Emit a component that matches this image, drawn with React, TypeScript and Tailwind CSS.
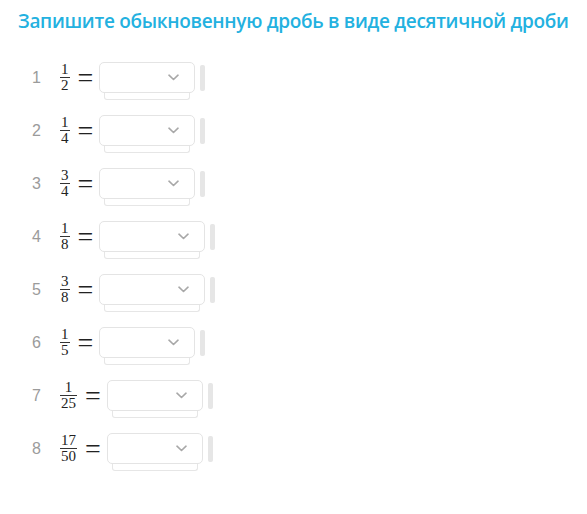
import React from "react";

type Row = { n: number; num: string; den: string; boxW: number };

const rows: Row[] = [
  { n: 1, num: "1", den: "2", boxW: 96 },
  { n: 2, num: "1", den: "4", boxW: 96 },
  { n: 3, num: "3", den: "4", boxW: 96 },
  { n: 4, num: "1", den: "8", boxW: 106 },
  { n: 5, num: "3", den: "8", boxW: 106 },
  { n: 6, num: "1", den: "5", boxW: 96 },
  { n: 7, num: "1", den: "25", boxW: 96 },
  { n: 8, num: "17", den: "50", boxW: 96 },
];

function Chevron() {
  return (
    <svg width="11" height="7" viewBox="0 0 11 7" fill="none">
      <path d="M1 1.2 L5.5 5.5 L10 1.2" stroke="#a8a8a8" strokeWidth="1.6" strokeLinecap="round" strokeLinejoin="round" />
    </svg>
  );
}

function Select({ w }: { w: number }) {
  return (
    <div className="flex items-center">
      <div className="flex flex-col pt-[7px]">
        <div
          className="h-[31px] rounded-[5px] border border-[#e4e4e4] bg-white flex items-center justify-end pr-[15px]"
          style={{ width: w }}
        >
          <Chevron />
        </div>
        <div
          className="ml-[5px] h-[7px] rounded-b-[3px] border border-t-0 border-[#e6e6e6]"
          style={{ width: w - 10 }}
        />
      </div>
      <div className="ml-[5px] w-[5px] h-[26px] rounded-[2px] bg-[#e6e6e6]" />
    </div>
  );
}

export default function App() {
  return (
    <div className="w-[587px] h-[514px] bg-white" style={{ fontFamily: "'Open Sans', sans-serif" }}>
      <div className="pl-[18px] pt-[9px]">
        <h1 className="text-[19px] leading-[24px] font-semibold text-[#23b1e0] tracking-[-0.3px]">
          Запишите обыкновенную дробь в виде десятичной дроби
        </h1>
      </div>
      <div className="mt-[18px] pl-[32px] flex flex-col">
        {rows.map((r) => (
          <div key={r.n} className="h-[53px] flex items-center">
            <span
              className="w-[28px] text-[16px] text-[#9b9b9b]"
              style={{ fontFamily: "'Liberation Sans', Arial, sans-serif" }}
            >
              {r.n}
            </span>
            <span
              className="inline-flex flex-col items-center text-[15px] leading-[13px] text-[#222]"
              style={{ fontFamily: "'Liberation Serif', 'Times New Roman', serif" }}
            >
              <span className="px-[1px] pb-[1px]">{r.num}</span>
              <span className="px-[1px] pt-[1px] border-t border-[#333] w-full text-center">{r.den}</span>
            </span>
            <span
              className="ml-[8px] mr-[6px] text-[28px] leading-[28px] text-[#222]"
              style={{ fontFamily: "'Liberation Serif', 'Times New Roman', serif" }}
            >
              =
            </span>
            <Select w={r.boxW} />
          </div>
        ))}
      </div>
    </div>
  );
}
